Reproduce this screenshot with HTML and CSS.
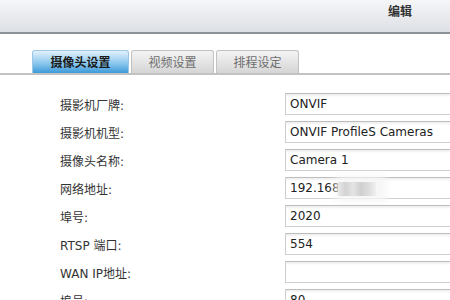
FILE: index.html
```html
<!DOCTYPE html>
<html lang="zh-CN">
<head>
    <meta charset="UTF-8">
    <title>编辑</title>
    <link rel="stylesheet" href="styles.css">
</head>
<body>
    <div class="header">
        <span class="header-title">编辑</span>
    </div>

    <div class="tabs">
        <div class="tab active">摄像头设置</div>
        <div class="tab">视频设置</div>
        <div class="tab">排程设定</div>
    </div>

    <div class="form">
        <div class="row">
            <label class="label">摄影机厂牌:</label>
            <div class="field">ONVIF</div>
        </div>
        <div class="row">
            <label class="label">摄影机机型:</label>
            <div class="field">ONVIF ProfileS Cameras</div>
        </div>
        <div class="row">
            <label class="label">摄像头名称:</label>
            <div class="field">Camera 1</div>
        </div>
        <div class="row">
            <label class="label">网络地址:</label>
            <div class="field">192.168<span class="masked"></span></div>
        </div>
        <div class="row">
            <label class="label">埠号:</label>
            <div class="field">2020</div>
        </div>
        <div class="row">
            <label class="label">RTSP 端口:</label>
            <div class="field">554</div>
        </div>
        <div class="row">
            <label class="label">WAN IP地址:</label>
            <div class="field"></div>
        </div>
        <div class="row">
            <label class="label">埠号:</label>
            <div class="field">80</div>
        </div>
    </div>
</body>
</html>
```
FILE: styles.css
```css
body {
    margin: 0;
    background: #ffffff;
    font-family: "DejaVu Sans", "Noto Sans CJK SC", sans-serif;
    color: #222;
    overflow: hidden;
}
.header {
    height: 32px;
    background: linear-gradient(#f5f6f8, #dde0e5);
    border-bottom: 2px solid #8e9399;
    display: flex;
    justify-content: flex-end;
    align-items: flex-start;
}
.header-title {
    font-family: "Noto Sans CJK SC", sans-serif;
    font-size: 12px;
    font-weight: bold;
    color: #333;
    margin: 2px 38px 0 0;
}
.tabs {
    display: flex;
    gap: 2px;
    margin-top: 16px;
    padding-left: 32px;
    border-bottom: 2px solid #c2c2c2;
}
.tab {
    width: 81px;
    height: 22px;
    line-height: 22px;
    text-align: center;
    font-family: "Noto Sans CJK SC", sans-serif;
    font-size: 12px;
    color: #6e6e6e;
    background: linear-gradient(#f4f4f4, #d5d5d5);
    border: 1px solid #c2c2c2;
    border-bottom: none;
    border-radius: 3px 3px 0 0;
}
.tab.active {
    width: 95px;
    color: #1a1a1a;
    font-weight: bold;
    background: linear-gradient(#e3f1fb, #8cc8ee 55%, #3d9ad8);
    border-color: #9cc6e4;
}
.form {
    display: flex;
    flex-direction: column;
    gap: 6px;
    margin-top: 18px;
    padding-left: 60px;
}
.row {
    display: flex;
    align-items: center;
    height: 22px;
}
.label {
    width: 225px;
    font-size: 12px;
    color: #333;
}
.field {
    flex: 1;
    height: 20px;
    line-height: 20px;
    margin-right: -20px;
    padding-left: 4px;
    font-size: 12px;
    color: #222;
    border: 1px solid #cfcfcf;
    border-top-color: #bdbdbd;
    box-shadow: inset 0 2px 2px rgba(0, 0, 0, 0.06);
    white-space: nowrap;
}
.masked {
    display: inline-block;
    width: 38px;
    height: 14px;
    vertical-align: middle;
    margin-left: -2px;
    background: linear-gradient(90deg, #e8e8e8, #d3d3d3 20%, #e4e4e4 40%, #d0d0d0 60%, #dcdcdc 80%, #f0f0f0);
    box-shadow: 4px 0 10px 6px #f6f6f6;
}
```
